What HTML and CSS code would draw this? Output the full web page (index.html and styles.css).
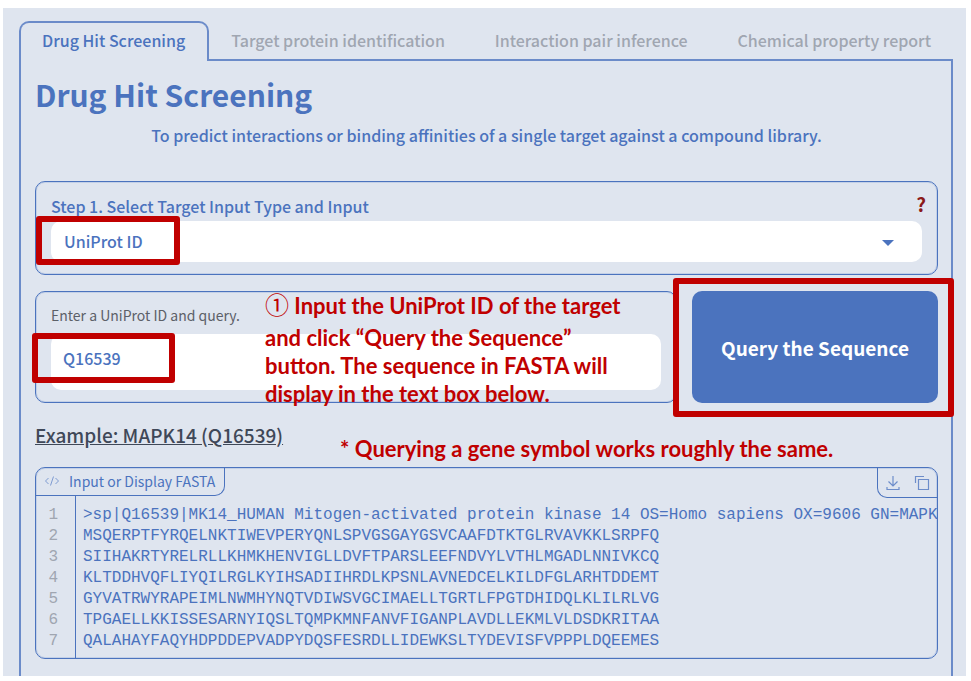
FILE: index.html
```html
<!DOCTYPE html>
<html lang="en">
<head>
  <meta charset="UTF-8">
  <meta name="viewport" content="width=device-width, initial-scale=1.0">
  <title>Drug Hit Screening</title>
  <link rel="stylesheet" href="styles.css">
</head>
<body>

  <div class="app">
    <div class="tabs" role="tablist">
      <button class="tab active" role="tab" aria-selected="true">Drug Hit Screening</button>
      <div class="tab-rest">
        <button class="tab" role="tab">Target protein identification</button>
        <button class="tab" role="tab">Interaction pair inference</button>
        <button class="tab" role="tab">Chemical property report</button>
      </div>
    </div>

    <main class="panel">
      <h1>Drug Hit Screening</h1>
      <p class="intro">To predict interactions or binding affinities of a single target against a compound library.</p>

      <div class="card step">
        <div class="step-head">
          <label for="input-type">Step 1. Select Target Input Type and Input</label>
          <span class="help">?</span>
        </div>
        <div class="select-wrap">
          <select id="input-type">
            <option>UniProt ID</option>
            <option>Gene symbol</option>
          </select>
          <svg class="caret" width="12" height="6" viewBox="0 0 12 6"><path d="M0 0h12L6 6z" fill="#4b73be"/></svg>
          <span class="mark mark-select"></span>
        </div>
      </div>

      <div class="query-row">
        <div class="card query">
          <label for="uniprot">Enter a UniProt ID and query.</label>
          <div class="input-wrap">
            <input type="text" id="uniprot" value="Q16539">
            <span class="mark mark-input"></span>
          </div>
          <p class="note note-query"><span class="first-line"><span class="circled">①</span> Input the UniProt ID of the target</span>and click “Query the Sequence”<br>button. The sequence in FASTA will<br>display in the text box below.</p>
        </div>
        <div class="button-wrap">
          <button class="query-button">Query the Sequence</button>
          <span class="mark mark-button"></span>
        </div>
      </div>

      <div class="example-row">
        <a class="example" href="#fasta">Example: MAPK14 (Q16539)</a>
        <p class="note">* Querying a gene symbol works roughly the same.</p>
      </div>

      <div class="code card">
        <div class="code-head">
          <label class="code-label" for="fasta">
            <svg width="16" height="12" viewBox="0 0 16 12" fill="none" stroke="#7f9bd1"><path d="M4.500 3L1.500 6l3 3M11.500 3l3 3-3 3M9.500 1.500l-3 9"/></svg>
            Input or Display FASTA
          </label>
          <div class="code-tools">
            <button aria-label="Download">
              <svg width="14" height="16" viewBox="0 0 14 16" fill="none" stroke="#6d8dca" stroke-width="1.2"><path d="M7 1v10M2.500 6.500L7 11l4.500-4.500M1 12v2.500h12V12"/></svg>
            </button>
            <button aria-label="Copy">
              <svg width="16" height="16" viewBox="0 0 16 16" fill="none" stroke="#6d8dca" stroke-width="1.2"><path d="M4.500 4.500h10v10h-10zM1.500 8V1.500H10"/></svg>
            </button>
          </div>
        </div>
        <div class="code-body">
          <div class="gutter">1<br>2<br>3<br>4<br>5<br>6<br>7</div>
          <textarea id="fasta" rows="7" wrap="off" spellcheck="false">&gt;sp|Q16539|MK14_HUMAN Mitogen-activated protein kinase 14 OS=Homo sapiens OX=9606 GN=MAPK14
MSQERPTFYRQELNKTIWEVPERYQNLSPVGSGAYGSVCAAFDTKTGLRVAVKKLSRPFQ
SIIHAKRTYRELRLLKHMKHENVIGLLDVFTPARSLEEFNDVYLVTHLMGADLNNIVKCQ
KLTDDHVQFLIYQILRGLKYIHSADIIHRDLKPSNLAVNEDCELKILDFGLARHTDDEMT
GYVATRWYRAPEIMLNWMHYNQTVDIWSVGCIMAELLTGRTLFPGTDHIDQLKLILRLVG
TPGAELLKKISSESARNYIQSLTQMPKMNFANVFIGANPLAVDLLEKMLVLDSDKRITAA
QALAHAYFAQYHDPDDEPVADPYDQSFESRDLLIDEWKSLTYDEVISFVPPPLDQEEMES</textarea>
        </div>
      </div>
    </main>
  </div>

</body>
</html>
```
FILE: styles.css
```css
* {
  box-sizing: border-box;
}
body {
  position: relative;
  margin: 8px 5px 5px 3px;
  background-color: #fff;
  color: #4b73be;
  font-family: "Noto Sans CJK SC", "Open Sans", sans-serif;
  font-size: 16px;
  font-weight: 500;
}
body::after {
  content: "";
  position: absolute;
  top: 64px;
  right: -5px;
  width: 1px;
  height: 29px;
  background-color: #777;
}
button, input, select, textarea {
  font-family: inherit;
  font-weight: inherit;
  color: inherit;
  border: 0;
  margin: 0;
}
button {
  cursor: pointer;
}
h1, p {
  margin: 0;
}
.app {
  padding: 13px 13px 0 16px;
  background-color: #dfe5ef;
}

/* tabs */
.tabs {
  display: flex;
}
.tab {
  height: 38px;
  padding: 0 22px;
  background: none;
  color: #a0a6b1;
  font-size: 16px;
  line-height: 38px;
  white-space: nowrap;
}
.tab.active {
  height: 40px;
  border: 2px solid #6b8bc9;
  border-bottom: 0;
  border-radius: 10px 10px 0 0;
  padding: 0 22px 4px 21px;
  color: #4b73be;
  line-height: 34px;
}
.tab-rest {
  flex: 1;
  display: flex;
  justify-content: space-between;
  border-bottom: 2px solid #6b8bc9;
}
.panel {
  border: 2px solid #6b8bc9;
  border-width: 0 2px;
  padding: 10px 13px 17px 14px;
}
h1 {
  font-size: 30px;
  line-height: 46px;
  margin-bottom: 3px;
}
.intro {
  text-align: center;
  line-height: 30px;
  margin-bottom: 31px;
}

/* form */
.card {
  border: 1px solid #4b73be;
  border-radius: 10px;
  box-shadow: inset 0 0 0 1px #c3d0e7;
}
.step {
  height: 94px;
  padding: 10px 15px;
}
.step-head {
  display: flex;
  justify-content: space-between;
  height: 29px;
  line-height: 28px;
}
.help {
  margin-right: -4px;
  color: #8b1a1a;
  font-size: 19px;
  font-weight: bold;
  line-height: 24px;
}
.select-wrap, .input-wrap, .button-wrap {
  position: relative;
}
select {
  display: block;
  width: 100%;
  height: 41px;
  padding: 0 13px 2px;
  border-radius: 10px;
  background-color: #fff;
  font-size: 16px;
  appearance: none;
}
.caret {
  position: absolute;
  top: 19px;
  right: 28px;
}
.query-row {
  display: flex;
  gap: 15px;
  margin-top: 16px;
}
.query {
  position: relative;
  flex: 1;
  padding: 11px 15px;
}
.query label {
  display: block;
  color: #5c6068;
  font-size: 14px;
  font-weight: normal;
  line-height: 24px;
  margin-bottom: 7px;
}
.query input {
  display: block;
  width: 100%;
  height: 56px;
  padding: 0 12px 8px;
  border-radius: 10px;
  background-color: #fff;
  font-size: 16px;
}
.query-button {
  width: 246px;
  height: 112px;
  border-radius: 10px;
  background-color: #4b73be;
  color: #fff;
  font-size: 19px;
  font-weight: bold;
}
.example-row {
  display: flex;
  gap: 57px;
  height: 64px;
  padding-top: 17px;
}
.example {
  color: #3f4858;
  font-size: 19px;
  line-height: 30px;
}

/* red annotations */
.note {
  color: #c00000;
  font-family: Lato, sans-serif;
  font-size: 22px;
  font-weight: bold;
  line-height: 28px;
  white-space: nowrap;
}
.example-row .note {
  padding-top: 15px;
}
.note-query {
  position: absolute;
  top: -3px;
  left: 229px;
}
.first-line {
  display: block;
  line-height: 34px;
  margin-bottom: 1px;
}
.circled {
  font-family: "Noto Sans CJK SC", sans-serif;
  font-size: 24px;
  font-weight: normal;
  line-height: 24px;
}
.mark {
  position: absolute;
  border: 6px solid #c00000;
  border-radius: 3px;
  pointer-events: none;
}
.mark-select {
  top: -5px;
  left: -15px;
  width: 144px;
  height: 49px;
}
.mark-input {
  top: -1px;
  left: -19px;
  width: 143px;
  height: 50px;
}
.mark-button {
  top: -13px;
  right: -16px;
  bottom: -14px;
  left: -19px;
}

/* fasta box */
.code {
  overflow: hidden;
}
.code-head {
  display: flex;
  justify-content: space-between;
  height: 28px;
}
.code-label {
  display: flex;
  align-items: center;
  gap: 9px;
  padding: 0 9px 2px 8px;
  border: 1px solid #4b73be;
  border-width: 0 1px 1px 0;
  border-radius: 0 0 10px 0;
  font-size: 14px;
  font-weight: normal;
}
.code-tools {
  display: flex;
  align-items: center;
  gap: 14px;
  height: 30px;
  padding: 0 7px 0 8px;
  border: 1px solid #4b73be;
  border-width: 0 0 1px 1px;
  border-radius: 0 0 0 10px;
}
.code-tools button {
  display: flex;
  padding: 0;
  background: none;
}
.code-body {
  display: flex;
  font-family: "Liberation Mono", monospace;
  font-size: 16px;
  font-weight: normal;
  line-height: 21px;
}
.gutter {
  width: 40px;
  padding: 9px 17px 6px 0;
  border-right: 1px solid #4b73be;
  color: #a0a6b1;
  text-align: right;
}
textarea {
  flex: 1;
  display: block;
  height: 162px;
  padding: 9px 0 6px 7px;
  background: none;
  font-size: 16px;
  line-height: 21px;
  font-family: inherit;
  overflow: hidden;
  resize: none;
}
```
